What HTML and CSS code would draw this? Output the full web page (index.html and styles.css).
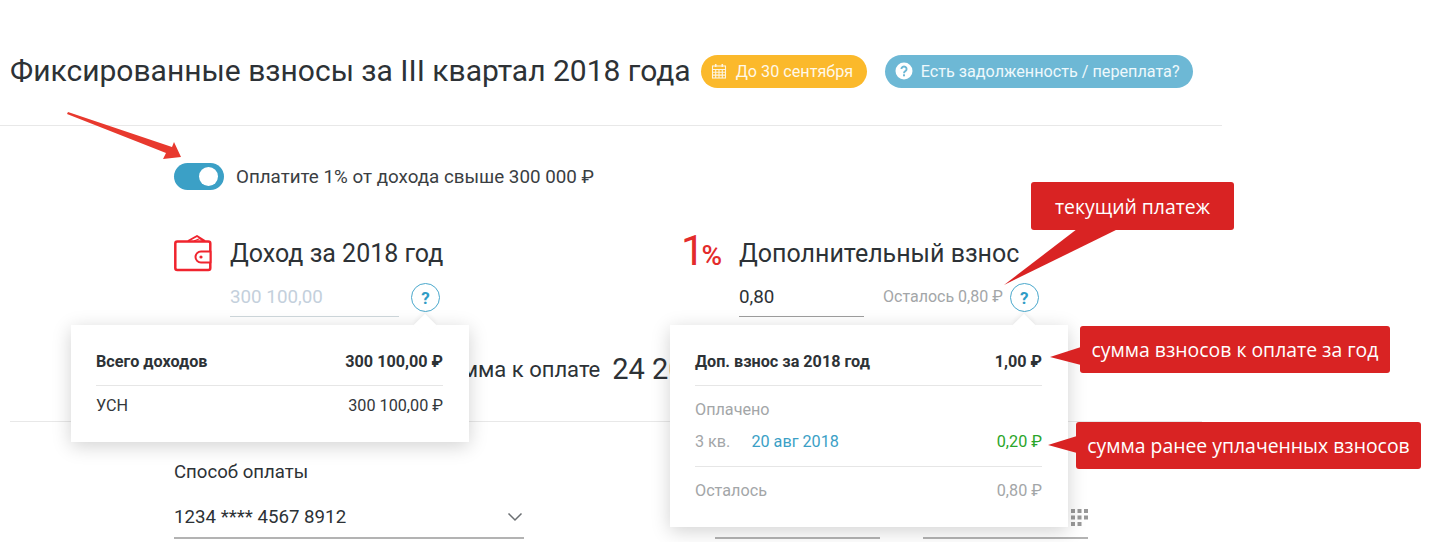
FILE: index.html
```html
<!DOCTYPE html>
<html lang="ru">
<head>
<meta charset="utf-8">
<title>Фиксированные взносы</title>
<link rel="stylesheet" href="styles.css">
</head>
<body>
<main class="page">
  <header class="head">
    <h1 class="title">Фиксированные взносы за III квартал 2018 года</h1>
    <span class="pill pill-yellow">
      <svg class="pill-cal" viewBox="0 0 16 16" width="16" height="16"><g fill="none" stroke="#fff" stroke-width="1.1" opacity=".85"><rect x="1.5" y="3" width="13" height="12"/><path d="M1.5 6.5h13M1.5 9.3h13M1.5 12.1h13M4.7 6.500V15M8 6.500V15M11.3 6.500V15"/><path d="M4.7 1v3M11.3 1v3" stroke-width="1.6"/></g></svg>
      До 30 сентября
    </span>
    <span class="pill pill-blue">
      <svg class="pill-q" viewBox="0 0 18 18" width="18" height="18"><circle cx="9" cy="9" r="8.5" fill="#fff"/><path d="M6.4 7a2.6 2.5 0 1 1 3.9 2.2c-.9.5-1.3 1-1.3 2" fill="none" stroke="#6db8d5" stroke-width="1.9"/><rect x="8" y="12.3" width="2" height="2" fill="#6db8d5"/></svg>
      Есть задолженность / переплата?
    </span>
  </header>

  <section class="toggle-row">
    <span class="toggle"><span class="knob"></span></span>
    <span class="toggle-label">Оплатите 1% от дохода свыше 300 000 ₽</span>
  </section>

  <section class="columns">
    <div class="col col-left">
      <div class="col-head">
        <svg class="wallet" viewBox="0 0 38 37" width="38" height="37"><g fill="none" stroke="#f0242e" stroke-linejoin="round"><rect x="1.3" y="6.500" width="35" height="28.500" rx="2" stroke-width="2.500"/><path d="M27 16.500h9.500v11H27a5.500 5.500 0 0 1 0-11z" fill="#fff" stroke-width="2"/><path d="M14 6l9-5 8 5" stroke-width="2"/><path d="M20 6l6-2.500 3 2.500" stroke-width="1.300"/></g><circle cx="27" cy="22" r="1.600" fill="#f0242e"/></svg>
        <h2 class="col-title">Доход за 2018 год</h2>
      </div>
      <div class="field-row">
        <span class="field field-income">300 100,00</span>
        <span class="help">?</span>
      </div>
    </div>
    <div class="col col-right">
      <div class="col-head">
        <span class="percent">1<small>%</small></span>
        <h2 class="col-title">Дополнительный взнос</h2>
      </div>
      <div class="field-row">
        <span class="field field-extra">0,80</span>
        <span class="left-note">Осталось 0,80 ₽</span>
        <span class="help">?</span>
      </div>
    </div>
  </section>

  <section class="total">
    <span class="total-label">Сумма к оплате</span>
    <span class="total-value">24 200,80 ₽</span>
  </section>

  <section class="pay">
    <div class="pay-method">
      <div class="pay-label">Способ оплаты</div>
      <div class="select">
        <span>1234 **** 4567 8912</span>
        <svg viewBox="0 0 16 10" width="16" height="10"><path d="M1.500 1.500L8 8l6.500-6.500" fill="none" stroke="#6b6f72" stroke-width="1.500"/></svg>
      </div>
    </div>
    <div class="pay-input"></div>
    <div class="pay-input pay-code">
      <svg viewBox="0 0 17 17" width="17" height="17"><g fill="#999"><rect x="0" y="0" width="4" height="4"/><rect x="6.500" y="0" width="4" height="4"/><rect x="13" y="0" width="4" height="4"/><rect x="0" y="6.500" width="4" height="4"/><rect x="6.500" y="6.500" width="4" height="4"/><rect x="13" y="6.500" width="4" height="4"/><rect x="0" y="13" width="4" height="4"/><rect x="6.500" y="13" width="4" height="4"/></g></svg>
    </div>
  </section>

  <aside class="pop pop-left">
    <div class="pop-row pop-strong"><span>Всего доходов</span><span>300 100,00 ₽</span></div>
    <div class="pop-row pop-plain"><span>УСН</span><span>300 100,00 ₽</span></div>
  </aside>

  <aside class="pop pop-right">
    <div class="pop-row pop-strong"><span>Доп. взнос за 2018 год</span><span>1,00 ₽</span></div>
    <div class="pop-paid">Оплачено</div>
    <div class="pop-row pop-muted pop-q"><span>3 кв. <a class="pop-date">20 авг 2018</a></span><span class="pop-green">0,20 ₽</span></div>
    <div class="pop-row pop-muted pop-last"><span>Осталось</span><span>0,80 ₽</span></div>
  </aside>

  <svg class="overlay" viewBox="0 0 1432 542" width="1432" height="542">
    <path d="M68 112L172 147l2-5 7 15-18 2 3-6L67 114z" fill="#e8392e"/>
    <path d="M1077 229h41L1004 285z" fill="#d92323"/>
    <path d="M1081 347v18L1050 357z" fill="#d92323"/>
    <path d="M1077 436v17L1048 445z" fill="#d92323"/>
  </svg>

  <div class="note note-current">текущий платеж</div>
  <div class="note note-sum">сумма взносов к оплате за год</div>
  <div class="note note-paid">сумма ранее уплаченных взносов</div>
</main>
</body>
</html>
```
FILE: styles.css
```css
* { box-sizing: border-box; }
html, body { margin: 0; padding: 0; background: #fff; }
body { font-family: Roboto, "Liberation Sans", sans-serif; color: #2b2f33; }
.page { position: relative; width: 1432px; height: 542px; overflow: hidden; }

.head { display: flex; align-items: center; width: 1222px; height: 126px; padding: 17px 0 0 10px; border-bottom: 1px solid #e8e8e8; }
.title { margin: 0; font-size: 30px; font-weight: 400; line-height: 36px; color: #2d3236; white-space: nowrap; }
.pill { display: inline-flex; align-items: center; height: 33px; border-radius: 17px; color: #fff; font-size: 16.200px; white-space: nowrap; }
.pill-yellow { margin-left: 10px; width: 166px; padding-left: 10px; gap: 9px; background: #fbb92b; color: #fff8e8; }
.pill-blue { margin-left: 18px; width: 308px; padding-left: 10px; gap: 8px; background: #6db8d5; color: #eef8fc; }

.toggle-row { display: flex; align-items: center; margin: 37px 0 0 174px; height: 27px; }
.toggle { display: flex; align-items: center; justify-content: flex-end; width: 50px; height: 27px; padding-right: 6px; border-radius: 14px; background: #3ba0c6; }
.knob { width: 19px; height: 19px; border-radius: 50%; background: #fff; }
.toggle-label { margin-left: 12px; font-size: 18.800px; color: #3a3e42; }

.columns { display: flex; margin: 41px 0 0 174px; }
.col-left { width: 507px; }
.col-head { display: flex; align-items: center; height: 44px; }
.wallet { display: block; }
.col-title { margin: 0 0 0 18px; font-size: 25px; font-weight: 400; color: #2d3236; white-space: nowrap; }
.col-right .col-title { margin-left: 19px; }
.percent { width: 39px; color: #e32b2b; font-size: 42px; font-weight: 400; line-height: 44px; letter-spacing: -3px; white-space: nowrap; }
.percent small { font-size: 28px; font-weight: 500; letter-spacing: 0; }

.field-row { display: flex; align-items: flex-start; height: 42px; margin-top: 6px; }
.field { display: block; font-size: 18.800px; line-height: 32px; height: 36px; border-bottom: 1px solid #cfd8dc; }
.field-income { width: 169px; margin-left: 56px; color: #c4d0dc; }
.field-extra { width: 125px; margin-left: 58px; color: #2d3236; border-bottom-color: #9e9e9e; }
.left-note { margin: 6px 0 0 19px; font-size: 16px; color: #a3a6a8; white-space: nowrap; }
.help { display: flex; align-items: center; justify-content: center; width: 29px; height: 29px; margin: 2px 0 0 12px; border: 1.500px solid #4aa8cc; border-radius: 50%; color: #2f9cc6; font-size: 17px; font-weight: 700; }
.field-row .left-note + .help { margin-left: 7px; }

.total { display: flex; align-items: center; height: 40px; margin: 26px 0 0 437px; }
.total-label { font-size: 22px; color: #2d3236; white-space: nowrap; }
.total-value { margin-left: 12px; font-size: 29px; color: #2d3236; white-space: nowrap; }

.pay { display: flex; align-items: flex-end; width: 1192px; height: 118px; margin-left: 10px; padding-left: 164px; border-top: 1px solid #e8e8e8; margin-top: 32px; }
.pay-method { width: 350px; }
.pay-label { font-size: 18.600px; line-height: 24px; color: #2d3236; margin-bottom: 20px; }
.select { display: flex; align-items: center; justify-content: space-between; height: 35px; padding: 0 0 8px; border-bottom: 2px solid #b3b3b3; font-size: 18.700px; color: #2d3236; }
.select svg { margin-right: 1px; }
.pay-input { width: 165px; margin-left: 191px; height: 2px; background: #b3b3b3; }
.pay-input + .pay-input { margin-left: 43px; }
.pay-code { position: relative; }
.pay-code svg { position: absolute; right: 0; bottom: 13px; }

.pop { position: absolute; background: #fff; box-shadow: 0 4px 18px rgba(0,0,0,.18); padding: 17px 26px 0 25px; }
.pop::before { content: ""; position: absolute; top: -8px; left: 346px; width: 16px; height: 16px; background: #fff; transform: rotate(45deg); box-shadow: -2px -2px 4px rgba(0,0,0,.05); }
.pop-left { left: 71px; top: 325px; width: 398px; height: 117px; }
.pop-right { left: 670px; top: 325px; width: 398px; height: 202px; }
.pop-row { display: flex; justify-content: space-between; align-items: center; font-size: 16.200px; color: #33373b; position: relative; }
.pop-strong { height: 44px; padding-bottom: 5px; font-weight: 700; color: #2d3236; border-bottom: 1px solid #e6e6e6; }
.pop-plain { height: 39px; }
.pop-paid { height: 44px; padding-top: 14px; line-height: 20px; font-size: 16.200px; color: #a3a6a8; }
.pop-muted { color: #a3a6a8; }
.pop-q { height: 37px; padding-bottom: 14px; border-bottom: 1px solid #e6e6e6; }
.pop-last { height: 46px; }
.pop-date { margin-left: 17px; color: #3b9fc6; }
.pop-green { color: #2aa52a; }

.overlay { position: absolute; left: 0; top: 0; pointer-events: none; }
.note { position: absolute; display: flex; align-items: center; justify-content: center; height: 47px; border-radius: 3px; background: #d92323; color: #fff; font-family: "Open Sans", sans-serif; font-size: 19.400px; white-space: nowrap; }
.note-current { left: 1031px; top: 182px; width: 203px; height: 48px; }
.note-sum { left: 1080px; top: 326px; width: 310px; }
.note-paid { left: 1076px; top: 422px; width: 345px; }
```
